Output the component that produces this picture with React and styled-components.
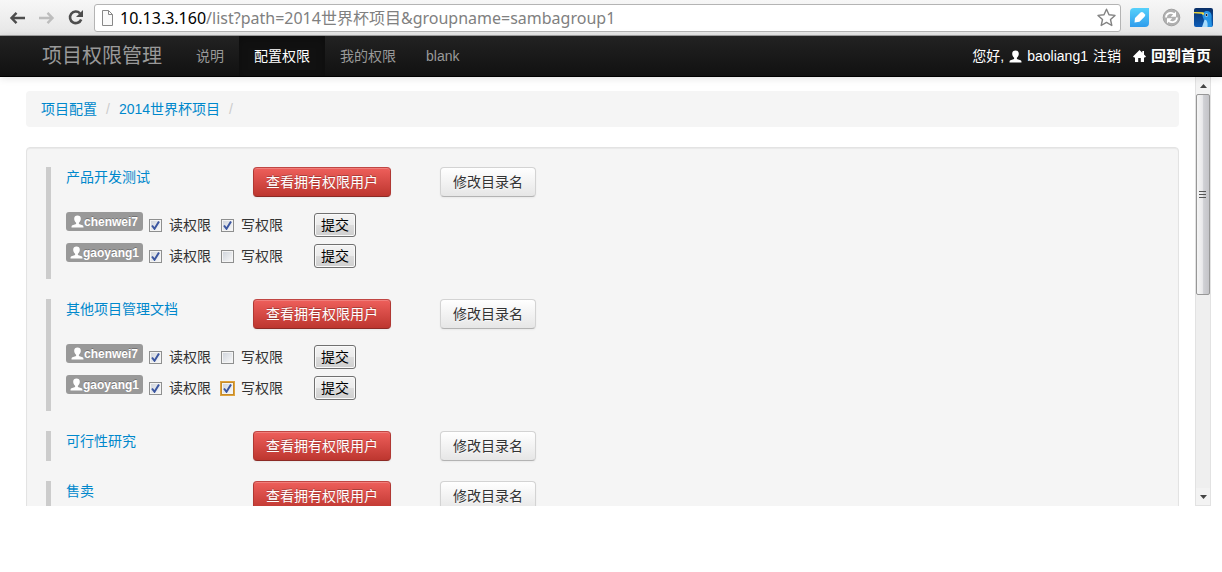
import React from "react";
import styled, { createGlobalStyle, css } from "styled-components";

const GlobalStyle = createGlobalStyle`
  * { box-sizing: border-box; }
  body {
    margin: 0;
    background: #fff;
    color: #333;
    font: 14px/20px "Liberation Sans", "Noto Sans CJK SC", sans-serif;
  }
  button, input { font-family: inherit; }
`;

const BrowserBar = styled.header`
  display: flex;
  align-items: center;
  height: 36px;
  padding: 0 3px;
  background: linear-gradient(#f7f7f7, #e6e6e6);
  border-bottom: 1px solid #a3a3a3;
`;

const ToolButton = styled.button`
  display: flex;
  flex: none;
  align-items: center;
  justify-content: center;
  width: ${(p) => p.$width || 29}px;
  height: 24px;
  padding: 0;
  border: 0;
  background: none;
`;

const AddressBox = styled.div`
  display: flex;
  flex: 1;
  align-items: center;
  height: 28px;
  margin: 0 2px 0 4px;
  padding: 0 4px 0 6px;
  background: #fff;
  border: 1px solid #b4b4b4;
  border-radius: 3px;
`;

const Url = styled.div`
  flex: 1;
  margin-left: 6px;
  color: #808080;
  font: 16px/24px "Noto Sans", "Noto Sans CJK SC", sans-serif;
  white-space: nowrap;
`;

const Host = styled.span`
  color: #000;
`;

const NavBar = styled.nav`
  display: flex;
  position: relative;
  z-index: 1;
  align-items: center;
  height: 41px;
  padding: 0 11px 0 42px;
  background: linear-gradient(#222, #111);
  border-bottom: 1px solid #000;
  box-shadow: 0 1px 8px rgba(0, 0, 0, 0.12);
  color: #fff;
  white-space: nowrap;
`;

const Brand = styled.a`
  margin-right: 19px;
  color: #999;
  font-size: 20px;
  text-decoration: none;
`;

const NavLink = styled.a`
  padding: 10px 15px;
  color: #999;
  text-decoration: none;
  ${(p) =>
    p.$active &&
    css`
      background: #111;
      box-shadow: inset 0 3px 8px rgba(0, 0, 0, 0.25);
      color: #fff;
    `}
`;

const UserArea = styled.div`
  display: flex;
  align-items: center;
  gap: 5px;
  margin-left: auto;
`;

const UserLink = styled.a`
  display: flex;
  align-items: center;
  gap: 5px;
  color: #fff;
  text-decoration: none;
`;

const HomeLink = styled(UserLink)`
  margin-left: 7px;
  font-size: 15px;
  font-weight: bold;
`;

const Viewport = styled.div`
  display: flex;
  height: 75vh;
  margin-right: 11px;
  overflow: hidden;
`;

const Content = styled.main`
  flex: 1;
  padding: 14px 16px 0 26px;
  overflow: hidden;
`;

const Breadcrumb = styled.ul`
  display: flex;
  gap: 9px;
  margin: 0 0 20px;
  padding: 8px 15px;
  background: #f5f5f5;
  border-radius: 4px;
  list-style: none;
`;

const Divider = styled.li`
  color: #ccc;
`;

const Link = styled.a`
  color: #08c;
  text-decoration: none;
`;

const Well = styled.section`
  display: grid;
  gap: 20px;
  padding: 19px;
  background: #f5f5f5;
  border: 1px solid #e3e3e3;
  border-radius: 4px;
  box-shadow: inset 0 1px 1px rgba(0, 0, 0, 0.05);
`;

const Folder = styled.article`
  padding-left: 15px;
  border-left: 5px solid #ccc;
`;

const FolderHeader = styled.div`
  display: grid;
  grid-template-columns: 187px 187px 1fr;
  justify-items: start;
  align-items: start;
`;

const Button = styled.button`
  height: 30px;
  padding: 0 12px;
  background: linear-gradient(#fff, #e6e6e6);
  border: 1px solid #d3d3d3;
  border-bottom-color: #b3b3b3;
  border-radius: 4px;
  box-shadow: inset 0 1px 0 rgba(255, 255, 255, 0.2), 0 1px 2px rgba(0, 0, 0, 0.05);
  color: #333;
  font-size: 14px;
  line-height: 20px;
  text-shadow: 0 1px 1px rgba(255, 255, 255, 0.75);
  white-space: nowrap;
  ${(p) =>
    p.$danger &&
    css`
      background: linear-gradient(#ee5f5b, #bd362f);
      border-color: #c04643 #b03833 #8c2a25;
      color: #fff;
      text-shadow: 0 -1px 0 rgba(0, 0, 0, 0.25);
    `}
`;

const Members = styled.div`
  padding: 15px 0 5px;
`;

const MemberForm = styled.form`
  display: flex;
  align-items: flex-start;
  height: 31px;
`;

const Badge = styled.span`
  display: flex;
  align-items: center;
  justify-content: center;
  width: 77px;
  height: 19px;
  margin-right: 6px;
  background: #999;
  border-radius: 3px;
  color: #fff;
  font-size: 12px;
  font-weight: bold;
  text-shadow: 0 -1px 0 rgba(0, 0, 0, 0.25);
`;

const CheckLabel = styled.label`
  display: flex;
  align-items: center;
  gap: 7px;
  height: 26px;
  margin-right: 10px;
`;

const CheckBox = styled.input`
  appearance: none;
  width: 13px;
  height: 13px;
  margin: 0;
  background: linear-gradient(135deg, #cdd2da, #fafafa);
  border: 1px solid #8e8f8f;
  outline: ${(p) => (p.$focused ? "1px solid #e0a33c" : "0")};
  box-shadow: inset 0 0 0 1px #f4f4f4;
  ${(p) => p.$focused && "border-color: #c58b2a;"}
  &:checked {
    background: url("data:image/svg+xml,%3Csvg xmlns='http://www.w3.org/2000/svg' viewBox='0 0 11 11'%3E%3Cpath d='M2 5.5L4.5 8.8L9 1.5' fill='none' stroke='%233b56a0' stroke-width='2'/%3E%3C/svg%3E"),
      linear-gradient(135deg, #cdd2da, #fafafa);
  }
`;

const Submit = styled.button`
  width: 42px;
  height: 24px;
  margin: 1px 0 0 21px;
  padding: 0;
  background: linear-gradient(#f3f3f3 0%, #ebebeb 50%, #dcdcdc 50%, #cfcfcf 100%);
  border: 1px solid #707070;
  border-radius: 3px;
  box-shadow: inset 0 0 0 1px #fafafa;
  color: #000;
  font-size: 14px;
  line-height: 20px;
`;

const ScrollBar = styled.div`
  display: flex;
  flex: none;
  flex-direction: column;
  width: 16px;
  background: #efefef;
  border: solid #e2e2e2;
  border-width: 0 1px 1px;
`;

const ScrollArrow = styled.div`
  display: flex;
  align-items: center;
  justify-content: center;
  height: 17px;
  background: #f3f3f3;
`;

const ScrollThumb = styled.div`
  display: flex;
  align-items: center;
  justify-content: center;
  height: 47%;
  margin-bottom: auto;
  background: linear-gradient(90deg, #f5f5f5, #e9e9eb 45%, #cfd0d4 55%, #c4c4c8);
  border: 1px solid #979797;
  border-radius: 2px;
`;

const UserIcon = () => (
  <svg width="13" height="13" viewBox="0 0 13 13" fill="#fff" aria-hidden="true">
    <path d="M6.500 .5C4.400 .5 3.200 1.700 3.200 3.700c0 1.700.8 3.200 1.900 4.100v1.200L1.500 10.300C.7 10.600.5 11 .5 12.500h12c0-1.500-.2-1.900-1-2.200L7.900 9V7.800C9 6.900 9.800 5.400 9.800 3.700 9.800 1.700 8.600 .5 6.500 .5z" />
  </svg>
);

const HomeIcon = () => (
  <svg width="13" height="13" viewBox="0 0 13 13" fill="#fff" aria-hidden="true">
    <path d="M6.500 0L0 6.500 1 7.500H2V12H5.200V8H7.800V12H11V7.500H12L13 6.500 11 4.500V1H9.300V2.800z" />
  </svg>
);

const Arrow = ({ color, flip }) => (
  <svg width="17" height="14" viewBox="0 0 17 14" fill="none" stroke={color} strokeWidth="2.400" aria-hidden="true">
    <path d={flip ? "M1 7H14M9.500 1.800L14.500 7L9.500 12.200" : "M16 7H3M7.500 1.800L2.500 7L7.500 12.200"} />
  </svg>
);

const ReloadIcon = () => (
  <svg width="17" height="17" viewBox="0 0 17 17" aria-hidden="true">
    <path d="M13 4.300A5.800 5.800 0 1 0 14.200 10.500" fill="none" stroke="#4d4d4d" strokeWidth="2.600" />
    <path d="M16 1V8H9z" fill="#4d4d4d" />
  </svg>
);

const PageIcon = () => (
  <svg width="13" height="16" viewBox="0 0 13 16" fill="#fafafa" stroke="#888" aria-hidden="true">
    <path d="M1.500 .5H7.500L11.500 4.500V15.500H1.500zM7.500 .5V4.500H11.500" />
  </svg>
);

const StarIcon = () => (
  <svg width="19" height="19" viewBox="0 0 19 19" fill="#fff" stroke="#828282" strokeWidth="1.400" strokeLinejoin="round" aria-hidden="true">
    <path d="M9.500 1.200L12 6.800L18 7.400L13.500 11.500L14.800 17.500L9.500 14.400L4.200 17.500L5.500 11.500L1 7.400L7 6.800z" />
  </svg>
);

const FeatherIcon = () => (
  <svg width="19" height="19" viewBox="0 0 19 19" aria-hidden="true">
    <defs>
      <linearGradient id="sky" x2="0" y2="1">
        <stop stopColor="#56d1fb" />
        <stop offset="1" stopColor="#2f9cec" />
      </linearGradient>
    </defs>
    <path d="M4 0H19V15Q19 19 15 19H0V4Q0 0 4 0z" fill="url(#sky)" />
    <path d="M4.500 14.500L5 10L10.500 4.500Q12 3.500 13.200 4.600L14.800 6.300Q15.800 7.500 14.500 8.800L9.500 13.700z" fill="#fff" />
  </svg>
);

const SyncIcon = () => (
  <svg width="19" height="19" viewBox="0 0 19 19" aria-hidden="true">
    <circle cx="9.500" cy="9.500" r="8.300" fill="#b0b0b0" stroke="#a0a0a0" />
    <g fill="none" stroke="#fff" strokeWidth="1.800">
      <path d="M4 9.500C4 5 9.500 3.500 12.500 6.500" />
      <path d="M15 9.500C15 14 9.500 15.500 6.500 12.500" />
    </g>
    <path d="M14 3.500V8.800H8.700zM5 15.500V10.200H10.300z" fill="#fff" />
  </svg>
);

const BirdIcon = () => (
  <svg width="19" height="19" viewBox="0 0 19 19" aria-hidden="true">
    <defs>
      <linearGradient id="night" x2="0" y2="1">
        <stop stopColor="#0a2f66" />
        <stop offset="1" stopColor="#0d5db8" />
      </linearGradient>
    </defs>
    <rect width="19" height="19" rx="2" fill="url(#night)" />
    <path d="M8.500 8C8.500 4.500 10.500 3 13 3C17 3.300 18.300 7 17.500 11L18 19H9L10 12z" fill="#2593e4" />
    <path d="M10.500 12C12.500 11 14 14 13.500 19H8z" fill="#a9dcfb" />
    <path d="M0 4L9 4.300C10.500 4.800 10.500 6.500 9 7L7.500 5.800L0 5.300z" fill="#f4dc3c" />
    <circle cx="12.500" cy="7" r="1.700" fill="#bfe6ff" />
    <circle cx="12.500" cy="7" r="1" fill="#111" />
  </svg>
);

const Triangle = ({ down }) => (
  <svg width="7" height="4" viewBox="0 0 7 4" fill="#444" aria-hidden="true">
    <path d={down ? "M0 0H7L3.500 4z" : "M0 4H7L3.500 0z"} />
  </svg>
);

const folders = [
  {
    name: "产品开发测试",
    members: [
      { user: "chenwei7", read: true, write: true },
      { user: "gaoyang1", read: true, write: false },
    ],
  },
  {
    name: "其他项目管理文档",
    members: [
      { user: "chenwei7", read: true, write: false },
      { user: "gaoyang1", read: true, write: true, focused: true },
    ],
  },
  { name: "可行性研究", members: [] },
  { name: "售卖", members: [] },
];

const Member = ({ user, read, write, focused }) => (
  <MemberForm onSubmit={(e) => e.preventDefault()}>
    <Badge>
      <UserIcon />
      {user}
    </Badge>
    <CheckLabel>
      <CheckBox type="checkbox" defaultChecked={read} />
      读权限
    </CheckLabel>
    <CheckLabel>
      <CheckBox type="checkbox" defaultChecked={write} $focused={focused} />
      写权限
    </CheckLabel>
    <Submit type="submit">提交</Submit>
  </MemberForm>
);

export default function App() {
  return (
    <>
      <GlobalStyle />
      <BrowserBar>
        <ToolButton aria-label="Back"><Arrow color="#4d4d4d" /></ToolButton>
        <ToolButton aria-label="Forward"><Arrow color="#bdbdbd" flip /></ToolButton>
        <ToolButton aria-label="Reload"><ReloadIcon /></ToolButton>
        <AddressBox>
          <PageIcon />
          <Url>
            <Host>10.13.3.160</Host>/list?path=2014世界杯项目&amp;groupname=sambagroup1
          </Url>
          <StarIcon />
        </AddressBox>
        <ToolButton $width={32} aria-label="Notes"><FeatherIcon /></ToolButton>
        <ToolButton $width={32} aria-label="Sync"><SyncIcon /></ToolButton>
        <ToolButton $width={32} aria-label="Bird"><BirdIcon /></ToolButton>
      </BrowserBar>
      <NavBar>
        <Brand href="#">项目权限管理</Brand>
        <NavLink href="#">说明</NavLink>
        <NavLink href="#" $active>配置权限</NavLink>
        <NavLink href="#">我的权限</NavLink>
        <NavLink href="#">blank</NavLink>
        <UserArea>
          <span>您好,</span>
          <UserLink href="#"><UserIcon />baoliang1</UserLink>
          <UserLink href="#">注销</UserLink>
          <HomeLink href="#"><HomeIcon />回到首页</HomeLink>
        </UserArea>
      </NavBar>
      <Viewport>
        <Content>
          <Breadcrumb>
            <li><Link href="#">项目配置</Link></li>
            <Divider>/</Divider>
            <li><Link href="#">2014世界杯项目</Link></li>
            <Divider>/</Divider>
          </Breadcrumb>
          <Well>
            {folders.map(({ name, members }) => (
              <Folder key={name}>
                <FolderHeader>
                  <Link href="#">{name}</Link>
                  <Button type="button" $danger>查看拥有权限用户</Button>
                  <Button type="button">修改目录名</Button>
                </FolderHeader>
                {members.length > 0 && (
                  <Members>
                    {members.map((m) => <Member key={m.user} {...m} />)}
                  </Members>
                )}
              </Folder>
            ))}
          </Well>
        </Content>
        <ScrollBar>
          <ScrollArrow><Triangle /></ScrollArrow>
          <ScrollThumb>
            <svg width="8" height="8" viewBox="0 0 8 8" stroke="#555" aria-hidden="true">
              <path d="M0 .5H7M0 3.500H7M0 6.500H7" />
            </svg>
          </ScrollThumb>
          <ScrollArrow><Triangle down /></ScrollArrow>
        </ScrollBar>
      </Viewport>
    </>
  );
}
